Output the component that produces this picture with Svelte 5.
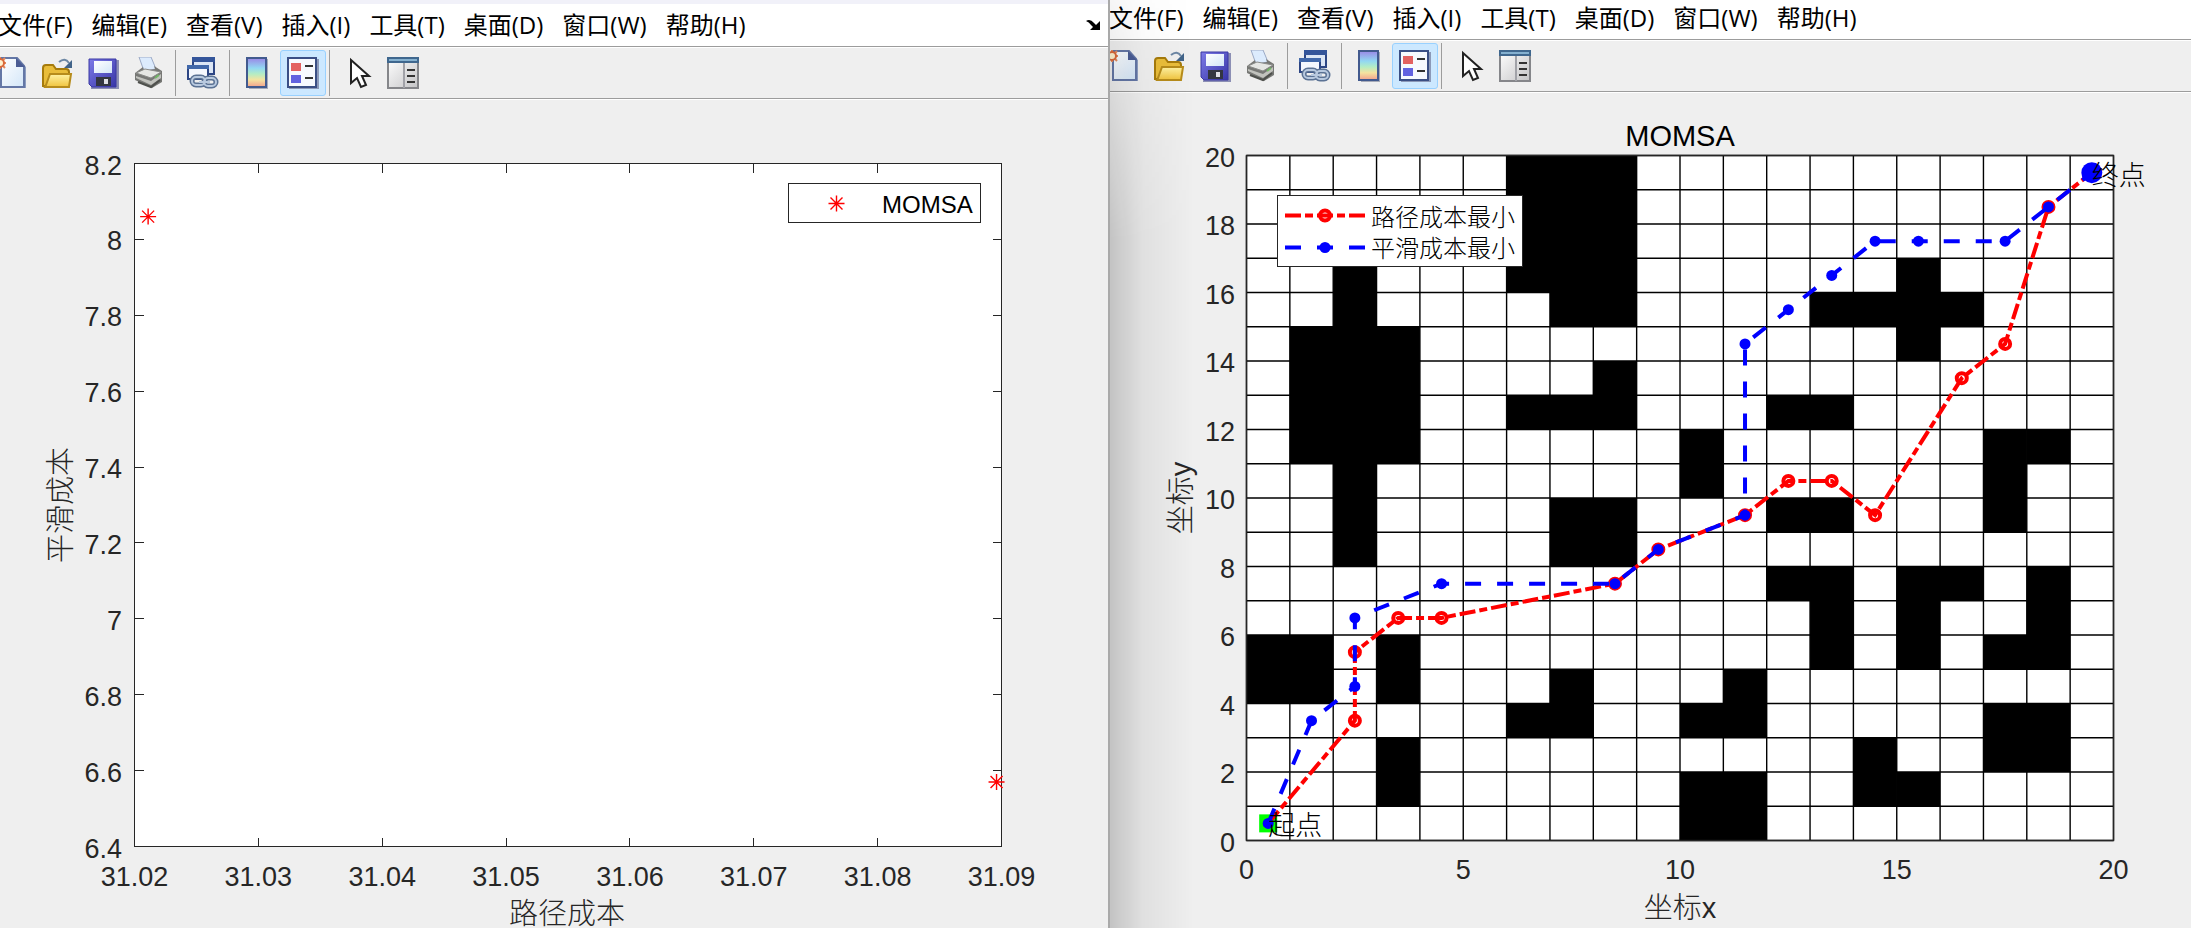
<script>
  const menus = ['文件(F)', '编辑(E)', '查看(V)', '插入(I)', '工具(T)', '桌面(D)', '窗口(W)', '帮助(H)'];
  const tools = [
    { id: 'new', label: '新建图窗' },
    { id: 'open', label: '打开文件' },
    { id: 'save', label: '保存图窗' },
    { id: 'print', label: '打印图窗' },
    { id: 'sep' },
    { id: 'link', label: '链接绘图' },
    { id: 'sep' },
    { id: 'colorbar', label: '插入颜色栏' },
    { id: 'legend', label: '插入图例', on: true },
    { id: 'sep' },
    { id: 'cursor', label: '编辑绘图' },
    { id: 'inspector', label: '打开属性检查器' },
  ];

  // left figure: pareto front
  const A = { l: 134.5, t: 163.5, r: 1001.5, b: 846.5 };
  const ax = (v) => A.l + ((v - 31.02) / 0.07) * (A.r - A.l);
  const ay = (v) => A.b - ((v - 6.4) / 1.8) * (A.b - A.t);
  const xTicks = [31.02, 31.03, 31.04, 31.05, 31.06, 31.07, 31.08, 31.09];
  const yTicks = [6.4, 6.6, 6.8, 7, 7.2, 7.4, 7.6, 7.8, 8, 8.2];
  const front = [[31.0211, 8.06], [31.0896, 6.57]];

  // right figure: 20 x 20 grid map
  const B = { l: 136.5, t: 155.5, r: 1003.5, b: 840.5 };
  const bx = (v) => B.l + (v / 20) * (B.r - B.l);
  const by = (v) => B.b - (v / 20) * (B.b - B.t);
  const lines = Array.from({ length: 21 }, (_, i) => i);
  // x, y, width, height in cells
  const blocks = [
    [6, 16, 3, 4], [7, 15, 2, 1], [2, 15, 1, 2], [1, 11, 3, 4], [2, 8, 1, 3],
    [0, 4, 2, 2], [3, 4, 1, 2], [3, 1, 1, 2], [6, 12, 3, 1], [8, 13, 1, 1],
    [7, 8, 2, 2], [6, 3, 2, 1], [7, 4, 1, 1], [10, 10, 1, 2], [12, 12, 2, 1],
    [12, 9, 2, 1], [10, 0, 2, 2], [10, 3, 2, 1], [11, 4, 1, 1], [12, 7, 2, 1],
    [13, 5, 1, 2], [14, 1, 1, 2], [15, 1, 1, 1], [15, 7, 2, 1], [15, 5, 1, 2],
    [17, 5, 2, 1], [18, 6, 1, 2], [17, 2, 2, 2], [17, 9, 1, 3], [18, 11, 1, 1],
    [13, 15, 4, 1], [15, 14, 1, 3],
  ];
  const red = [
    [0.5, 0.5], [2.5, 3.5], [2.5, 5.5], [3.5, 6.5], [4.5, 6.5], [8.5, 7.5], [9.5, 8.5], [11.5, 9.5],
    [12.5, 10.5], [13.5, 10.5], [14.5, 9.5], [16.5, 13.5], [17.5, 14.5], [18.5, 18.5], [19.5, 19.5],
  ];
  const blue = [
    [0.5, 0.5], [1.5, 3.5], [2.5, 4.5], [2.5, 6.5], [4.5, 7.5], [8.5, 7.5], [9.5, 8.5], [11.5, 9.5],
    [11.5, 14.5], [12.5, 15.5], [13.5, 16.5], [14.5, 17.5], [15.5, 17.5], [17.5, 17.5], [18.5, 18.5], [19.5, 19.5],
  ];
  const pts = (p) => p.map(([x, y]) => `${bx(x)},${by(y)}`).join(' ');
</script>

{#snippet icon(id)}
  <svg class="icon" viewBox="0 0 32 32" aria-hidden="true">
    {#if id === 'new'}
      <path d="M6 2h17l8 8v21H6z" fill="#8b9cc0" />
      <path d="M6 1h16l7 8v21H6z" fill="url(#g-page)" stroke="#6477a6" stroke-width="2" />
      <path d="M21 1v9h9z" fill="#4a5c94" />
      <g stroke="#e38a5d" stroke-width="2"><path d="M5 0v12M-1 6h12M1 1l9 10M10 1L1 11" /></g>
      <circle cx="5" cy="6" r="4" fill="#fff1cd" stroke="#d9683a" stroke-width="2" />
    {:else if id === 'open'}
      <path d="M18 5q6-5 10 1" fill="none" stroke="#6d87a4" stroke-width="2" />
      <path d="M31 3v8h-8z" fill="#426489" />
      <path d="M2 11q0-3 3-3h7l3 4h10q3 0 3 3v14H2z" fill="#e9bd3a" stroke="#a67b0c" stroke-width="2" />
      <path d="M5 28l4-11h21l-2 13H4z" fill="url(#g-folder)" stroke="#b78c1b" stroke-width="2" />
    {:else if id === 'save'}
      <path d="M4 3h28v29H4z" fill="#8c8fb4" />
      <path d="M2 2h27v28H5l-3-3z" fill="url(#g-disk)" stroke="#3a38a3" stroke-width="1" />
      <path d="M7 4h18v12H7z" fill="url(#g-page)" />
      <path d="M9 20h15v9H9z" fill="#333641" />
      <path d="M17 22h4v5h-4z" fill="#dfe0e6" />
    {:else if id === 'print'}
      <path d="M6 0h12l5 12-12 2z" fill="#dcebfd" stroke="#9ba9c5" />
      <path d="M2 16l8-6 1 4 11-2-1-3 8 5v11l-10 6-17-8z" fill="#777875" />
      <path d="M3 16l9-4 16 3-10 6z" fill="#e5e6e3" stroke="#8a8b88" />
      <path d="M3 19l15 5 10-7v4l-10 7-15-7z" fill="#c1c2bd" />
      <path d="M5 25l13 5 9-7" fill="none" stroke="#4e504c" stroke-width="2" />
      <path d="M22 21l4-3" stroke="#73b766" stroke-width="2" />
    {:else if id === 'link'}
      <path d="M6 1h21v16H6z" fill="#dce6f5" stroke="#2d4684" stroke-width="2" />
      <path d="M5 0h23v5H5z" fill="#34559a" />
      <path d="M1 9h20v13H1z" fill="#f4f7fd" stroke="#2d4684" stroke-width="2" />
      <path d="M0 8h22v4H0z" fill="#4168aa" />
      <g fill="none" stroke="#5b7294" stroke-width="5">
        <rect x="5" y="20" width="13" height="8" rx="4" /><rect x="17" y="21" width="12" height="8" rx="4" />
      </g>
      <g fill="none" stroke="#b8c9df" stroke-width="2">
        <rect x="5" y="20" width="13" height="8" rx="4" /><rect x="17" y="21" width="12" height="8" rx="4" /><path d="M12 25h11" />
      </g>
    {:else if id === 'colorbar'}
      <path d="M8 2h19v30H8z" fill="#a7abb8" />
      <path d="M6 1h19v29H6z" fill="url(#g-bar)" stroke="#425a8e" stroke-width="2" />
    {:else if id === 'legend'}
      <path d="M2 2h30v30H2z" fill="#8c99b8" />
      <path d="M1 1h28v29H1z" fill="#f7f9fe" stroke="#3b4f85" stroke-width="2" />
      <path d="M4 6h10v8H4z" fill="#e36161" /><path d="M4 18h10v8H4z" fill="#6262e0" />
      <path d="M18 9h8M18 21h8" stroke="#333" stroke-width="2" />
    {:else if id === 'cursor'}
      <path d="M10 3v23l6-5 4 9 5-2-4-9h7z" fill="#fff" stroke="#222" stroke-width="2" />
    {:else if id === 'inspector'}
      <path d="M1 1h30v30H1z" fill="url(#g-panel)" stroke="#85868a" stroke-width="2" />
      <path d="M0 0h32v6H0z" fill="#3f678e" /><path d="M2 2h28v2H2z" fill="#84b0cf" />
      <path d="M17 6v25" stroke="#a1a2a8" stroke-width="2" />
      <path d="M20 13h8M20 19h8M20 25h8" stroke="#333" stroke-width="2" />
    {/if}
  </svg>
{/snippet}

{#snippet bars()}
  <nav class="menubar">
    {#each menus as m}
      <button class="menu">{m}</button>
    {/each}
  </nav>
  <div class="toolbar">
    {#each tools as t}
      {#if t.id === 'sep'}
        <span class="sep"></span>
      {:else}
        <button class="tool" class:on={t.on} aria-label={t.label}>{@render icon(t.id)}</button>
      {/if}
    {/each}
  </div>
{/snippet}

{#snippet star(x, y)}
  <path class="star" d="M{x - 8} {y}h16M{x} {y - 8}v16M{x - 6} {y - 6}l12 12M{x + 6} {y - 6}l-12 12" />
{/snippet}

<svg class="defs" width="0" height="0" aria-hidden="true">
  <defs>
    <linearGradient id="g-page" x2="1" y2="1"><stop stop-color="#fff" /><stop offset="1" stop-color="#d3e6f8" /></linearGradient>
    <linearGradient id="g-folder" x2="0" y2="1"><stop stop-color="#fff3a4" /><stop offset="1" stop-color="#f0c33c" /></linearGradient>
    <linearGradient id="g-disk" x2="1" y2="1"><stop stop-color="#7d7be8" /><stop offset="1" stop-color="#3735a6" /></linearGradient>
    <linearGradient id="g-bar" x2="0" y2="1">
      <stop stop-color="#9a86e6" /><stop offset=".35" stop-color="#92d8f2" /><stop offset=".55" stop-color="#b4edc4" />
      <stop offset=".75" stop-color="#f4e3a0" /><stop offset="1" stop-color="#f2a08c" />
    </linearGradient>
    <linearGradient id="g-panel" x2="1" y2="1"><stop stop-color="#fff" /><stop offset="1" stop-color="#c4c4c6" /></linearGradient>
  </defs>
</svg>

<main class="desk">
  <section class="win left">
    {@render bars()}
    <button class="dock" aria-label="停靠图窗">
      <svg viewBox="0 0 16 12" aria-hidden="true"><path d="M1 3q4-3 8 2l2 2 4-4v9H5l3-3-2-2Q4 4 1 3z" /></svg>
    </button>
    <svg class="plot" viewBox="0 100 1108 828">
      <rect class="axes" x={A.l} y={A.t} width={A.r - A.l} height={A.b - A.t} />
      {#each xTicks as t, i}
        {#if i > 0 && i < 7}
          <path class="tick" d="M{ax(t)} {A.b}v-9M{ax(t)} {A.t}v9" />
        {/if}
        <text class="num" x={ax(t)} y="886" text-anchor="middle">{t}</text>
      {/each}
      {#each yTicks as t, i}
        {#if i > 0 && i < 9}
          <path class="tick" d="M{A.l} {ay(t)}h9M{A.r} {ay(t)}h-9" />
        {/if}
        <text class="num" x="122" y={ay(t) + 11} text-anchor="end">{t}</text>
      {/each}
      <text class="name" x="567" y="924" text-anchor="middle">路径成本</text>
      <text class="name" transform="translate(71 505) rotate(-90)" text-anchor="middle">平滑成本</text>
      {#each front as [x, y]}
        {@render star(ax(x), ay(y))}
      {/each}
      <rect class="key" x="788.5" y="183.5" width="192" height="39" />
      {@render star(836.5, 203.5)}
      <text class="entry" x="882" y="213">MOMSA</text>
    </svg>
  </section>

  <section class="win right">
    {@render bars()}
    <svg class="plot" viewBox="0 93 1081 835">
      <rect class="axes" x={B.l} y={B.t} width={B.r - B.l} height={B.b - B.t} />
      {#each blocks as [x, y, w, h]}
        <rect x={bx(x)} y={by(y + h)} width={bx(w) - B.l} height={B.b - by(h)} />
      {/each}
      {#each lines as i}
        <path class="grid" d="M{bx(i)} {B.t}V{B.b}M{B.l} {by(i)}H{B.r}" />
      {/each}
      <rect class="frame" x={B.l} y={B.t} width={B.r - B.l} height={B.b - B.t} />
      {#each [0, 5, 10, 15, 20] as t}
        <text class="num" x={bx(t)} y="879" text-anchor="middle">{t}</text>
      {/each}
      {#each [0, 2, 4, 6, 8, 10, 12, 14, 16, 18, 20] as t}
        <text class="num" x="125" y={by(t) + 11} text-anchor="end">{t}</text>
      {/each}
      <text class="title" x="570" y="146" text-anchor="middle">MOMSA</text>
      <text class="name" x="570" y="918" text-anchor="middle">坐标x</text>
      <text class="name" transform="translate(81 498) rotate(-90)" text-anchor="middle">坐标y</text>

      <rect class="start" x={bx(0.5) - 9} y={by(0.5) - 9} width="18" height="18" />
      <polyline class="cost" points={pts(red)} />
      {#each red.slice(1, -1) as [x, y]}
        <circle class="ring" cx={bx(x)} cy={by(y)} r="5" />
      {/each}
      <polyline class="smooth" points={pts(blue)} />
      {#each blue as [x, y]}
        <circle class="dot" cx={bx(x)} cy={by(y)} r="5.5" />
      {/each}
      <circle class="dot" cx={bx(19.5)} cy={by(19.5)} r="10.5" />
      <text class="mark" x={bx(0.5)} y={by(0.5) + 12}>起点</text>
      <text class="mark" x={bx(19.5)} y={by(19.5) + 12}>终点</text>

      <rect class="key" x="167.5" y="195.5" width="245" height="71" />
      <path class="cost" d="M175 215.5h80" />
      <circle class="ring" cx="215" cy="215.5" r="5" />
      <path class="smooth" d="M175 247.5h80" />
      <circle class="dot" cx="215" cy="247.5" r="5.5" />
      <text class="entry" x="261" y="226">路径成本最小</text>
      <text class="entry" x="261" y="257">平滑成本最小</text>
    </svg>
  </section>
</main>

<style>
  :global(body) { background: #efefef; overflow: hidden; }
  .defs { position: absolute; }
  .desk { display: flex; min-height: 100vh; background: #efefef; }
  .win { position: relative; min-width: 0; overflow: hidden; background: #efefef; }
  .left { flex: 1108 1 0; border-top: 4px solid #f1f1f9; }
  .right { flex: 1081 1 0; border-left: 2px solid #a9a9a9; }
  /* shadow that the left window casts */
  .right::before {
    content: ''; position: absolute; inset: 0 auto 0 0; width: 84px; z-index: 1; pointer-events: none;
    background: linear-gradient(90deg, rgba(0,0,0,.18), rgba(0,0,0,.06) 40%, transparent);
    mask-image: linear-gradient(rgba(0,0,0,.2), #000 240px);
  }
  button { border: 0; padding: 0; background: transparent; color: #000; }
  .menubar {
    display: flex; gap: 19px; height: 42px; align-items: center; background: #fff;
    border-bottom: 1px solid #9c9c9c; padding-left: 2px; margin-left: -4px;
  }
  .right .menubar { height: 36px; padding: 0 0 3px 3px; }
  .menu { font: 24px/32px 'Open Sans', 'Noto Sans CJK SC', sans-serif; white-space: nowrap; }
  .toolbar {
    display: flex; align-items: center; height: 50px; margin-left: -12px;
    border-top: 1px solid #fff; border-bottom: 1px solid #9c9c9c;
  }
  .right .toolbar { margin-left: -10px; }
  .tool {
    box-sizing: border-box; width: 46px; height: 46px; display: flex; flex: none;
    align-items: center; justify-content: center; border: 1px solid transparent; border-radius: 3px;
  }
  .tool.on { background: #cce8ff; border-color: #99d1ff; }
  .icon { width: 32px; height: 32px; }
  .sep { width: 1px; height: 46px; margin: 0 4px 0 3px; background: #9c9c9c; flex: none; }
  .dock { position: absolute; top: 14px; right: 7px; width: 16px; height: 12px; }
  .dock svg { display: block; }
  .plot { display: block; width: 100%; height: auto; border-top: 1px solid #fff; }

  .axes { fill: #fff; stroke: #262626; }
  .tick { stroke: #262626; shape-rendering: crispEdges; }
  .grid { stroke: #000; stroke-width: 1.4px; }
  .frame { fill: none; stroke: #262626; stroke-width: 1.4px; }
  .key { fill: #fff; stroke: #262626; }
  .star { fill: none; stroke: #f00; stroke-width: 1.4px; }
  .start { fill: #0f0; }
  .cost { fill: none; stroke: #f00; stroke-width: 4px; stroke-dasharray: 16 4 8 4; }
  .smooth { fill: none; stroke: #00f; stroke-width: 4px; stroke-dasharray: 16 16; }
  .ring { fill: none; stroke: #f00; stroke-width: 4px; }
  .dot { fill: #00f; }
  text { font-family: 'Liberation Sans', 'Noto Sans CJK SC', sans-serif; font-weight: 300; }
  .num { font-size: 27px; fill: #262626; }
  .name { font-size: 29px; fill: #262626; }
  .title { font-size: 29px; }
  .entry { font-size: 24px; }
  .mark { font-size: 27px; }
</style>
